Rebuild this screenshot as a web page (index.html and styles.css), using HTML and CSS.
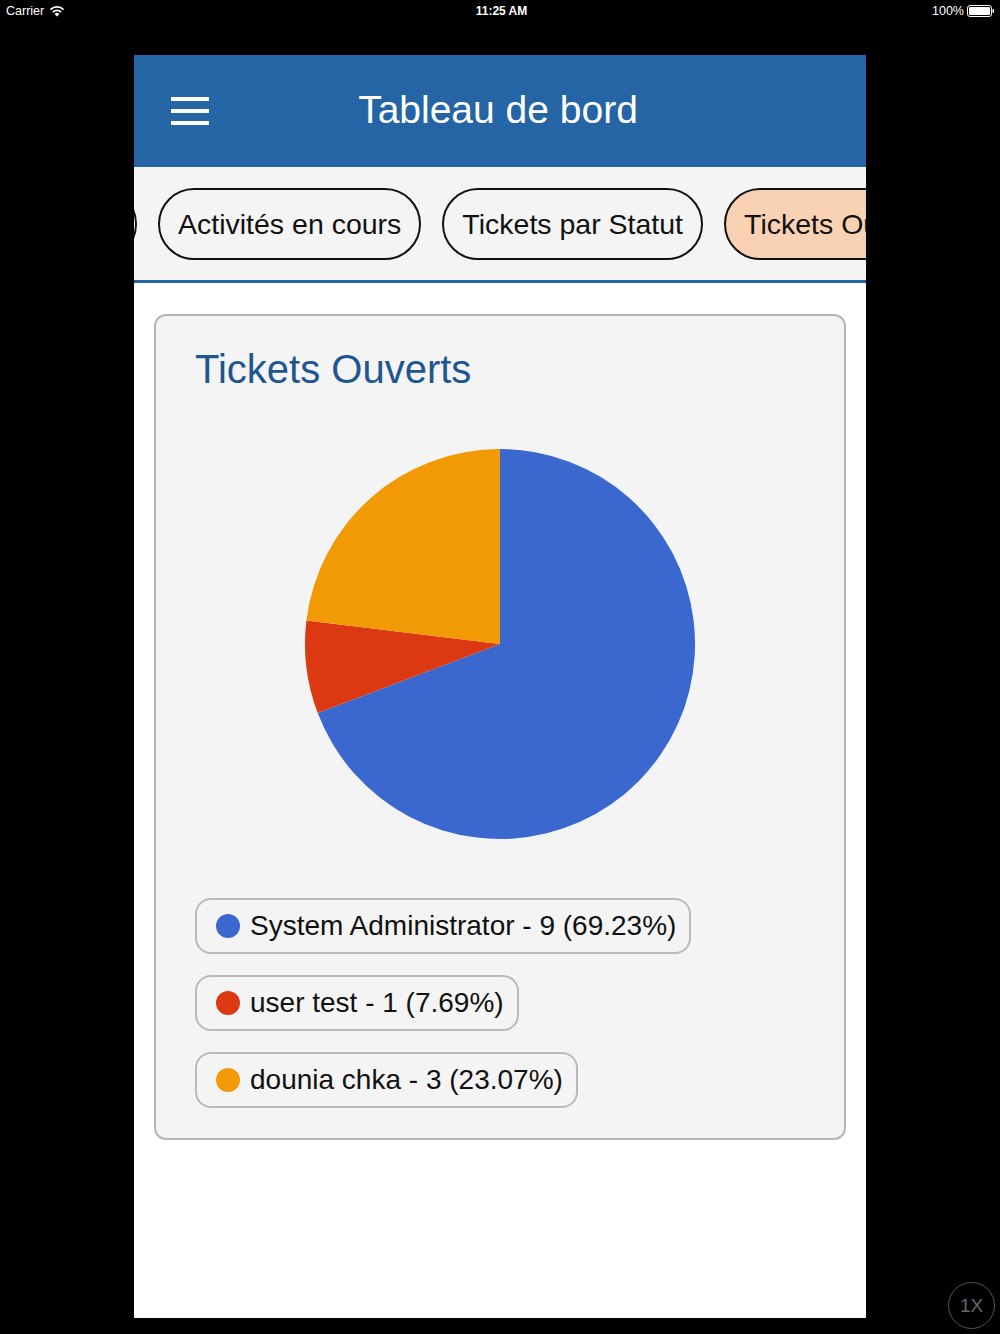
FILE: index.html
```html
<!DOCTYPE html>
<html lang="fr">
<head>
<meta charset="utf-8">
<title>Tableau de bord</title>
<link rel="stylesheet" href="styles.css">
</head>
<body>
<div class="statusbar">
  <div class="sb-left">
    <span>Carrier</span>
    <svg class="wifi" width="16" height="12" viewBox="0 0 16 12">
      <path d="M8 11.5 L5.6 8.9 A3.4 3.4 0 0 1 10.4 8.9 Z" fill="#fff"/>
      <path d="M3.9 7.1 A5.9 5.9 0 0 1 12.1 7.1" stroke="#fff" stroke-width="1.7" fill="none"/>
      <path d="M1.5 4.6 A9.3 9.3 0 0 1 14.5 4.6" stroke="#fff" stroke-width="1.7" fill="none"/>
    </svg>
  </div>
  <div class="sb-time">11:25 AM</div>
  <div class="sb-right">
    <span>100%</span>
    <svg width="28" height="12" viewBox="0 0 28 12">
      <rect x="0.5" y="0.5" width="24" height="11" rx="2.5" fill="none" stroke="#fff" stroke-width="1"/>
      <rect x="2" y="2" width="21" height="8" rx="1" fill="#fff"/>
      <rect x="25.5" y="4" width="1.5" height="4" rx="0.7" fill="#fff"/>
    </svg>
  </div>
</div>

<div class="app">
  <header class="topbar">
    <div class="menu">
      <span></span><span></span><span></span>
    </div>
    <h1 class="title">Tableau de bord</h1>
  </header>

  <nav class="tabs">
    <div class="track">
      <div class="pill pill-first">Tickets</div>
      <div class="pill">Activités en cours</div>
      <div class="pill">Tickets par Statut</div>
      <div class="pill active">Tickets Ouverts</div>
    </div>
  </nav>

  <main class="content">
    <section class="card">
      <h2 class="card-title">Tickets Ouverts</h2>
      <div class="chart">
        <svg width="400" height="400" viewBox="0 0 400 400">
          <path d="M200,200 L200,5 A195,195 0 1,1 17.7,269.1 Z" fill="#3a68ce"/>
          <path d="M200,200 L17.7,269.1 A195,195 0 0,1 6.4,176.5 Z" fill="#dc3912"/>
          <path d="M200,200 L6.4,176.5 A195,195 0 0,1 200,5 Z" fill="#f29906"/>
        </svg>
      </div>
      <ul class="legend">
        <li class="item"><span class="dot blue"></span>System Administrator - 9 (69.23%)</li>
        <li class="item"><span class="dot red"></span>user test - 1 (7.69%)</li>
        <li class="item"><span class="dot orange"></span>dounia chka - 3 (23.07%)</li>
      </ul>
    </section>
  </main>
</div>

<div class="zoom-btn">1X</div>
</body>
</html>
```

FILE: styles.css
```css
* { box-sizing: border-box; }

html, body {
  margin: 0;
  padding: 0;
  background: #000;
  width: 1000px;
  height: 1334px;
  overflow: hidden;
  font-family: "Liberation Sans", Arial, sans-serif;
}

.statusbar {
  height: 22px;
  display: flex;
  align-items: center;
  justify-content: space-between;
  padding: 0 5px 0 6px;
  color: #fff;
  font-size: 12.5px;
  position: relative;
}

.sb-left {
  display: flex;
  align-items: center;
  gap: 5px;
}

.sb-time {
  position: absolute;
  left: 0;
  right: 0;
  text-align: center;
  font-weight: bold;
  font-size: 12px;
  padding-left: 3px;
  pointer-events: none;
}

.sb-right {
  display: flex;
  align-items: center;
  gap: 3px;
}

.app {
  margin: 33px 0 0 134px;
  width: 732px;
  height: 1263px;
  background: #fff;
  display: flex;
  flex-direction: column;
}

.topbar {
  height: 112px;
  background: #2564a5;
  display: flex;
  align-items: center;
  position: relative;
  flex-shrink: 0;
}

.menu {
  margin-left: 37px;
  width: 38px;
  display: flex;
  flex-direction: column;
  gap: 8.5px;
}

.menu span {
  display: block;
  height: 3.5px;
  background: #fff;
}

.title {
  margin: 0;
  position: absolute;
  left: 0;
  right: 0;
  text-align: center;
  color: #fff;
  font-weight: normal;
  font-size: 39px;
  top: 33px;
  line-height: 44px;
  padding-right: 4px;
}

.tabs {
  height: 116px;
  background: #f4f4f4;
  border-bottom: 3px solid #2564a5;
  overflow: hidden;
  flex-shrink: 0;
}

.track {
  display: flex;
  gap: 21px;
  padding-top: 21px;
  margin-left: -197px;
}

.pill {
  flex-shrink: 0;
  height: 72px;
  border: 2px solid #111;
  border-radius: 36px;
  padding: 0 18px;
  display: flex;
  align-items: center;
  font-size: 28.5px;
  color: #111;
  white-space: nowrap;
  background: #f4f4f4;
}

.pill-first {
  width: 200px;
  justify-content: center;
}

.pill.active {
  background: #f9d1b3;
}

.content {
  padding: 31px 20px 0;
}

.card {
  background: #f4f4f4;
  border: 2px solid #b5b5b5;
  border-radius: 12px;
  padding: 30px 39px 30px;
}

.card-title {
  margin: 0;
  font-weight: normal;
  color: #1e5690;
  font-size: 40px;
  line-height: 46px;
}

.chart {
  display: flex;
  justify-content: center;
  margin-top: 52px;
}

.legend {
  list-style: none;
  margin: 54px 0 0;
  padding: 0;
  display: flex;
  flex-direction: column;
  align-items: flex-start;
  gap: 21px;
}

.item {
  height: 56px;
  border: 2px solid #bababa;
  border-radius: 16px;
  display: flex;
  align-items: center;
  padding: 0 13px 0 19px;
  font-size: 28px;
  color: #111;
  white-space: nowrap;
}

.dot {
  width: 24px;
  height: 24px;
  border-radius: 50%;
  margin-right: 10px;
  flex-shrink: 0;
}

.dot.blue { background: #3a68ce; }
.dot.red { background: #dc3912; }
.dot.orange { background: #f29906; }

.zoom-btn {
  position: absolute;
  left: 948px;
  top: 1282px;
  width: 47px;
  height: 47px;
  border: 1.5px solid #555;
  border-radius: 50%;
  color: #666;
  font-size: 19px;
  display: flex;
  align-items: center;
  justify-content: center;
}
```
